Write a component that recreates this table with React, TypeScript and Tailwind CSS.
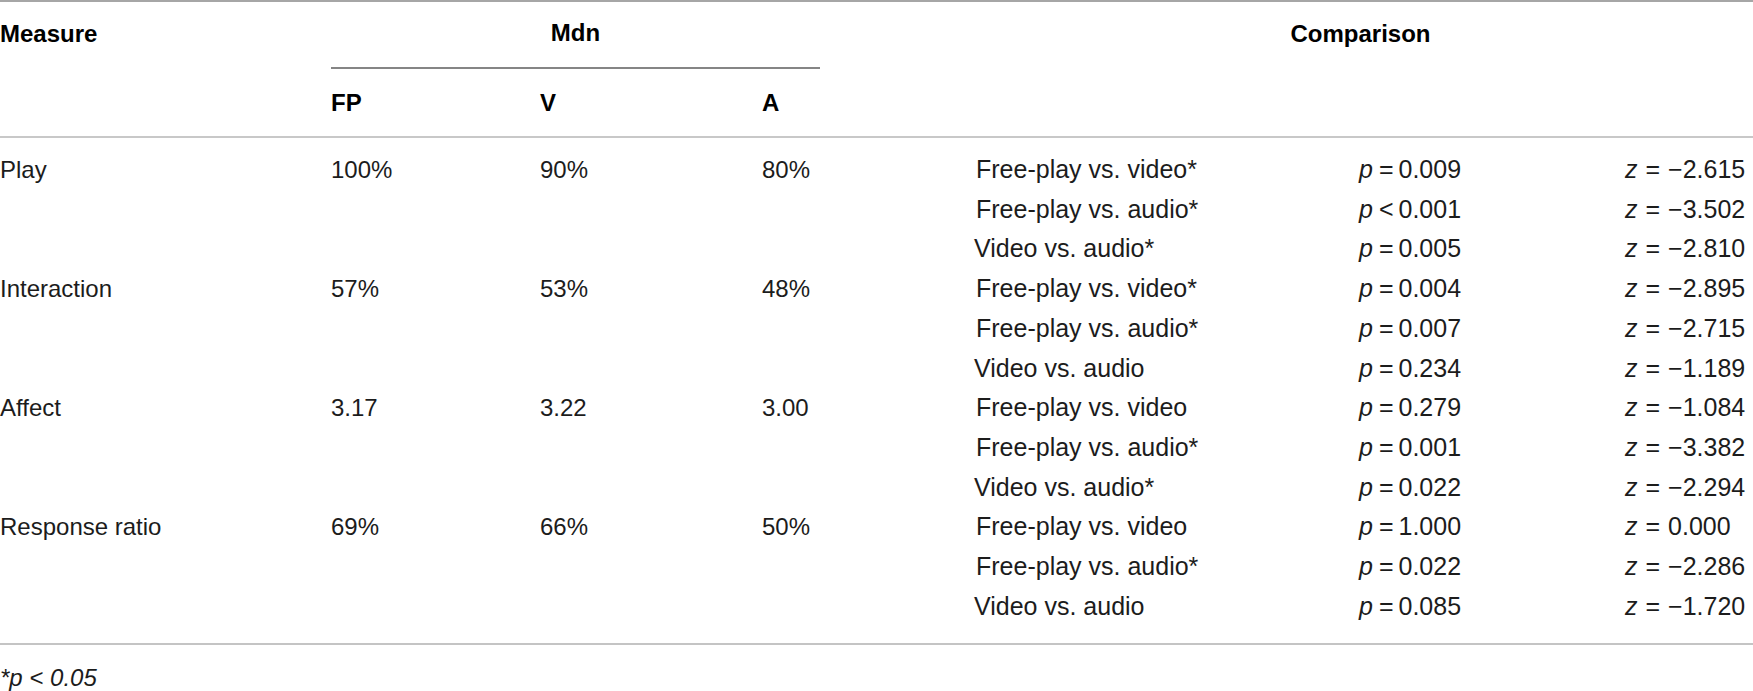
type Comparison = {
  label: string
  op: string
  p: string
  z: string
}

type Group = {
  measure: string
  fp: string
  v: string
  a: string
  rows: Comparison[]
}

const groups: Group[] = [
  {
    measure: 'Play',
    fp: '100%',
    v: '90%',
    a: '80%',
    rows: [
      { label: 'Free-play vs. video*', op: '=', p: '0.009', z: '\u22122.615' },
      { label: 'Free-play vs. audio*', op: '<', p: '0.001', z: '\u22123.502' },
      { label: 'Video vs. audio*', op: '=', p: '0.005', z: '\u22122.810' },
    ],
  },
  {
    measure: 'Interaction',
    fp: '57%',
    v: '53%',
    a: '48%',
    rows: [
      { label: 'Free-play vs. video*', op: '=', p: '0.004', z: '\u22122.895' },
      { label: 'Free-play vs. audio*', op: '=', p: '0.007', z: '\u22122.715' },
      { label: 'Video vs. audio', op: '=', p: '0.234', z: '\u22121.189' },
    ],
  },
  {
    measure: 'Affect',
    fp: '3.17',
    v: '3.22',
    a: '3.00',
    rows: [
      { label: 'Free-play vs. video', op: '=', p: '0.279', z: '\u22121.084' },
      { label: 'Free-play vs. audio*', op: '=', p: '0.001', z: '\u22123.382' },
      { label: 'Video vs. audio*', op: '=', p: '0.022', z: '\u22122.294' },
    ],
  },
  {
    measure: 'Response ratio',
    fp: '69%',
    v: '66%',
    a: '50%',
    rows: [
      { label: 'Free-play vs. video', op: '=', p: '1.000', z: '0.000' },
      { label: 'Free-play vs. audio*', op: '=', p: '0.022', z: '\u22122.286' },
      { label: 'Video vs. audio', op: '=', p: '0.085', z: '\u22121.720' },
    ],
  },
]

// column starts: 0, 331, 540, 762, 976, 1359, 1625
const cols = 'grid grid-cols-[331px_209px_222px_214px_383px_266px_128px]'

function Stat({ name, op, value, wide }: { name: string; op: string; value: string; wide?: boolean }) {
  return (
    <div className="whitespace-nowrap text-[25px]">
      <span className="italic">{name}</span>
      <span className={wide ? 'ml-[8px] mr-[8px]' : 'ml-[6px] mr-[5px]'}>{op}</span>
      {value}
    </div>
  )
}

export default function App() {
  return (
    <div
      className="w-[1753px] h-[691px] bg-white text-[#1c1c1c] text-[24px] overflow-hidden"
      style={{ fontFamily: '"Liberation Sans", Arial, Helvetica, sans-serif' }}
    >
      {/* Header */}
      <div className="border-t-2 border-[#a6a6a6] border-b-2 border-b-[#c8c8c8] font-bold text-black">
        <div className={`${cols} h-[67px] items-center`}>
          <div className="-mt-[3px]">Measure</div>
          <div className="col-span-3 self-stretch flex items-center justify-center border-b-[2px] border-[#858585] mr-[156px] pb-[3px]">
            Mdn
          </div>
          <div className="col-span-3 text-center pr-[8px] -mt-[3px]">Comparison</div>
        </div>
        <div className={`${cols} h-[67px] items-center`}>
          <div />
          <div>FP</div>
          <div>V</div>
          <div>A</div>
        </div>
      </div>

      {/* Body */}
      <div className="pt-[12px] pb-[17px] border-b-2 border-[#c4c4c4]">
        {groups.map((g) =>
          g.rows.map((r, i) => (
            <div key={g.measure + i} className={`${cols} h-[39.7px] items-center`}>
              <div>{i === 0 ? g.measure : ''}</div>
              <div>{i === 0 ? g.fp : ''}</div>
              <div>{i === 0 ? g.v : ''}</div>
              <div>{i === 0 ? g.a : ''}</div>
              <div className={`text-[25px] ${r.label.startsWith('Video') ? '-ml-[2px]' : ''}`}>{r.label}</div>
              <Stat name="p" op={r.op} value={r.p} />
              <Stat name="z" op="=" value={r.z} wide />
            </div>
          ))
        )}
      </div>

      {/* Footnote */}
      <div className="pt-[21px] text-[24px] leading-[24px] italic">*p &lt; 0.05</div>
    </div>
  )
}
